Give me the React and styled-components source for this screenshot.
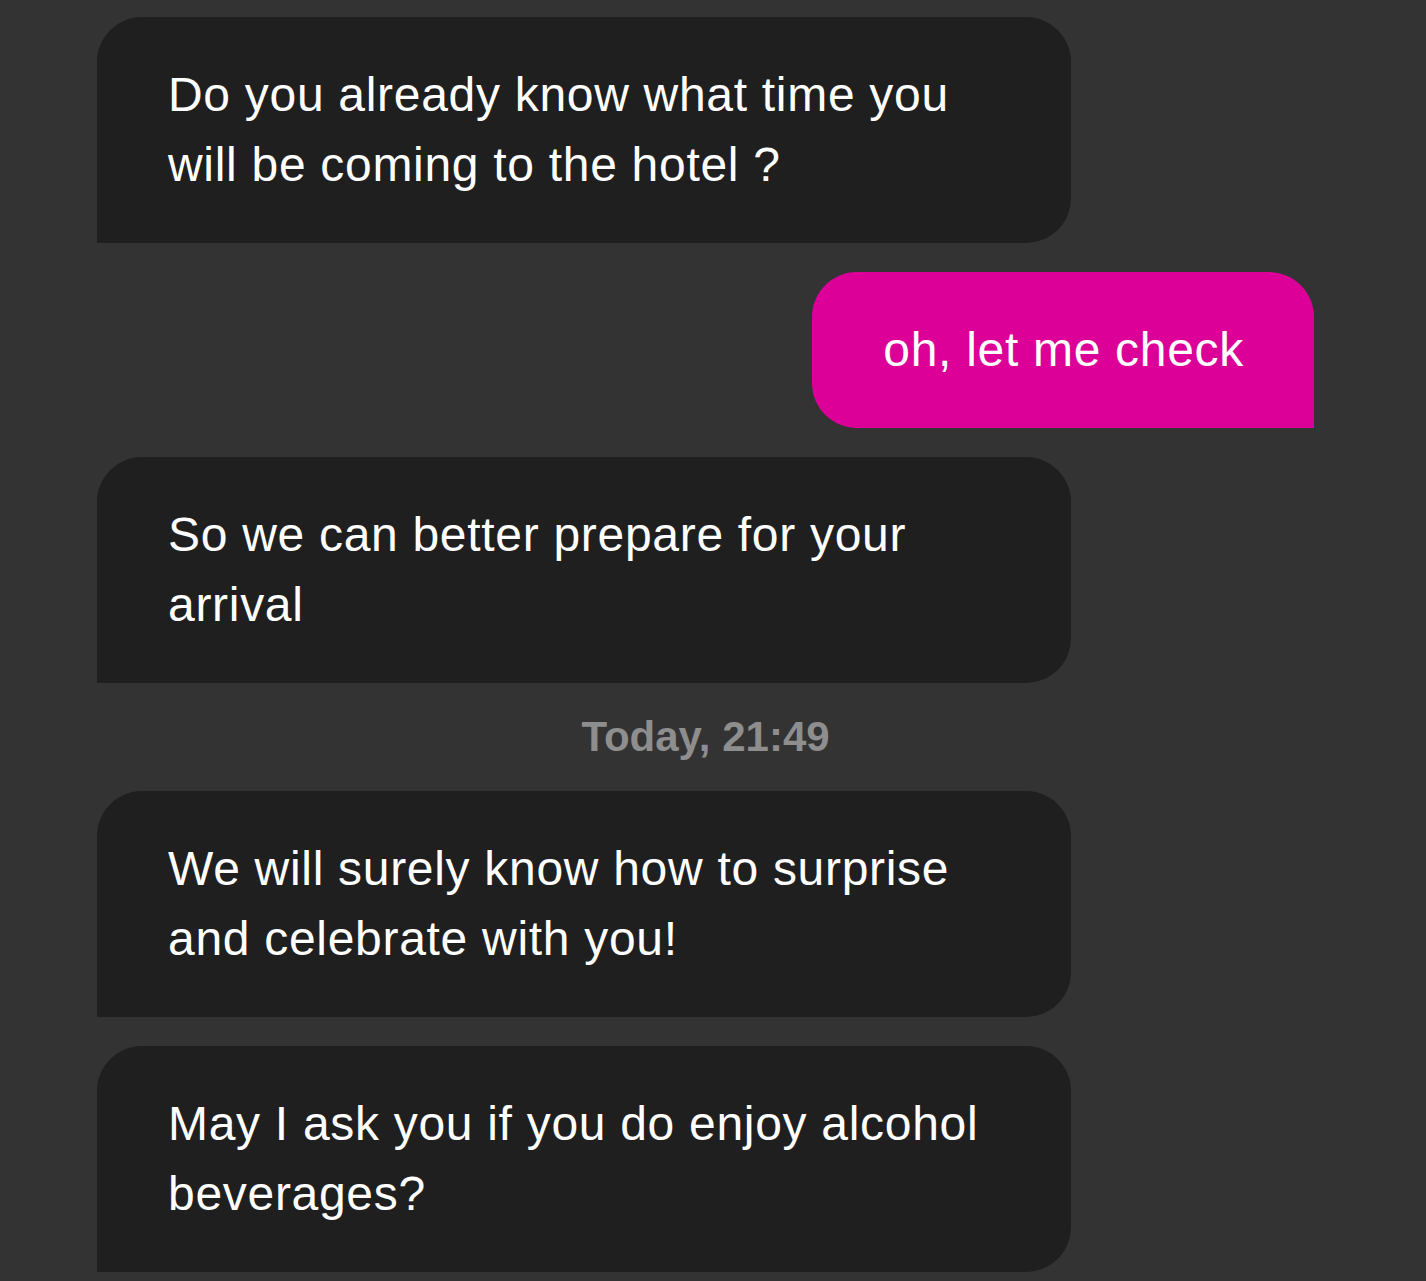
import React from 'react'
import styled, { createGlobalStyle } from 'styled-components'

const messages = [
  { id: 1, from: 'hotel', text: 'Do you already know what time you will be coming to the hotel ?' },
  { id: 2, from: 'me', text: 'oh, let me check' },
  { id: 3, from: 'hotel', text: 'So we can better prepare for your arrival' },
  { id: 4, type: 'time', text: 'Today, 21:49' },
  { id: 5, from: 'hotel', text: 'We will surely know how to surprise and celebrate with you!' },
  { id: 6, from: 'hotel', text: 'May I ask you if you do enjoy alcohol beverages?' },
]

const App = () => {
  return (
    <>
      <GlobalStyle />
      <Thread>
        {messages.map((m) =>
          m.type === 'time' ? (
            <Stamp key={m.id}>{m.text}</Stamp>
          ) : (
            <Bubble key={m.id} mine={m.from === 'me'}>
              {m.text}
            </Bubble>
          )
        )}
      </Thread>
    </>
  )
}

const GlobalStyle = createGlobalStyle`
  html, body {
    margin: 0;
    background: #333333;
  }
  body {
    font-family: "Liberation Sans", Arial, sans-serif;
    -webkit-font-smoothing: antialiased;
  }
`

const Thread = styled.div`
  display: flex;
  flex-direction: column;
  gap: 29px;
  padding: 17px 112px 17px 97px;
  min-height: 1281px;
  box-sizing: border-box;
`

const Bubble = styled.div`
  box-sizing: border-box;
  align-self: ${({ mine }) => (mine ? 'flex-end' : 'flex-start')};
  width: ${({ mine }) => (mine ? 'auto' : '974px')};
  padding: 43px 70px 43px 71px;
  background: ${({ mine }) => (mine ? '#dd0098' : '#1f1f1f')};
  border-radius: ${({ mine }) => (mine ? '45px 45px 0 45px' : '45px 45px 45px 0')};
  color: #ffffff;
  font-size: 48px;
  letter-spacing: 0.7px;
  line-height: 70px;
`

const Stamp = styled.div`
  text-align: center;
  color: #8e8e8e;
  font-size: 42px;
  font-weight: 700;
  line-height: 50px;
`

export default App
